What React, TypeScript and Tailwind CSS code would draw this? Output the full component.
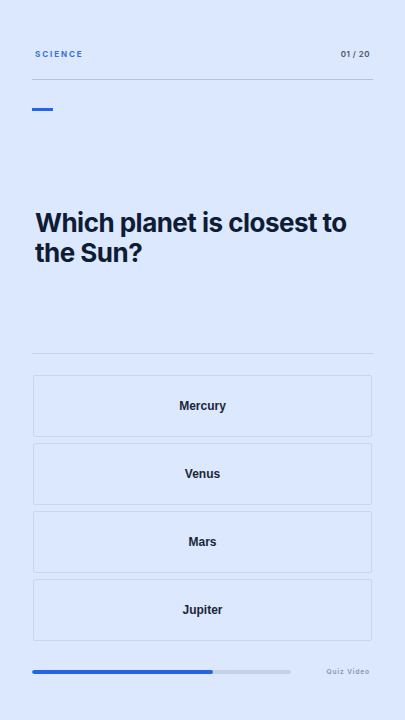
import React from "react";

const options = ["Mercury", "Venus", "Mars", "Jupiter"];

export default function App() {
  return (
    <div
      className="w-[405px] h-[720px] bg-[#dbe8fd] flex flex-col px-[32px] overflow-hidden"
      style={{ fontFamily: "Inter, 'Liberation Sans', sans-serif" }}
    >
      <div className="pt-[49px] flex items-center justify-between h-[59px] px-[3px]">
        <span className="text-[8px] leading-[10px] font-bold tracking-[0.24em] text-[#3a6fdc]">
          SCIENCE
        </span>
        <span className="text-[8px] leading-[10px] font-semibold tracking-[0.06em] text-[#4b5568]">
          01 / 20
        </span>
      </div>
      <div className="mt-[20px] h-px bg-[#b4c3dc]" />
      <div className="mt-[28px] h-[3px] w-[21px] bg-[#2563eb]" />
      <h1 className="mt-[97px] px-[3px] text-[26px] leading-[30px] font-bold tracking-[-0.02em] text-[#0f1c36]">
        Which planet is closest to the Sun?
      </h1>
      <div className="mt-[85px] h-px bg-[#c5d3ea]" />
      <div className="mt-[21px] px-px flex flex-col gap-[6px]">
        {options.map((o) => (
          <div
            key={o}
            className="h-[62px] rounded-[2px] border border-[#c9d7ee] bg-[#dce8fd] flex items-center justify-center text-[12px] font-bold text-[#1b2539]"
            style={{ fontFamily: "'Liberation Sans', Arial, sans-serif" }}
          >
            {o}
          </div>
        ))}
      </div>
      <div className="mt-[27px] flex items-center">
        <div className="w-[259px] h-[4px] rounded-full bg-[#c3d2e9] overflow-hidden">
          <div className="h-full w-[70%] rounded-full bg-[#2563eb]" />
        </div>
        <span className="ml-auto mr-[3px] text-[6.5px] leading-[8px] font-semibold tracking-[0.14em] text-[#8a94a8]">
          Quiz Video
        </span>
      </div>
    </div>
  );
}
